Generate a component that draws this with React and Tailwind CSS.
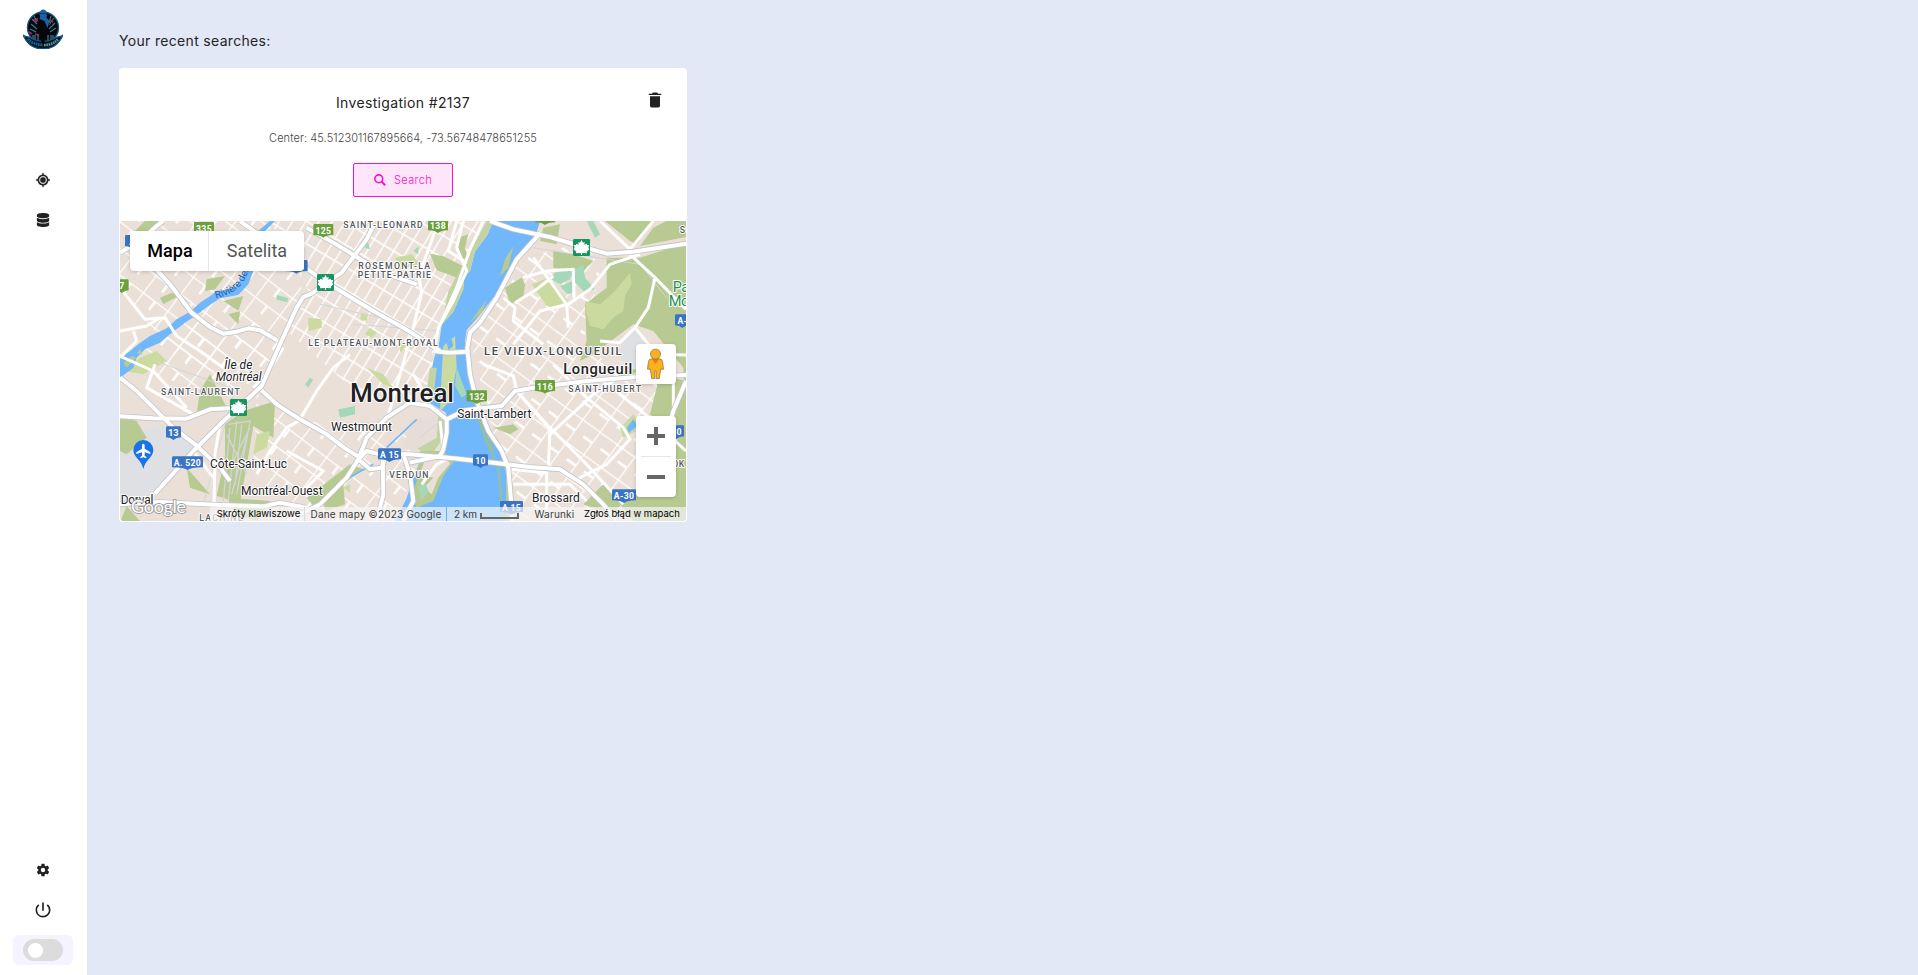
import React from 'react';
import { BiCurrentLocation } from 'react-icons/bi';
import { FaDatabase } from 'react-icons/fa';
import { IoSettingsSharp } from 'react-icons/io5';
import { IoMdTrash } from 'react-icons/io';
import { MdPowerSettingsNew } from 'react-icons/md';

const Logo = () => (
  <svg viewBox="0 0 40 40" className="h-10 w-10">
    <circle cx="20" cy="18.500" r="15.5" fill="#07090e" stroke="#17567f" strokeWidth="1.4" />
    <path d="M9 10l5 5M8 15l6 5M11 7l3 6M7 20l6 3M31 9l-5 7M32 14l-6 6M28 7l-2 7M33 19l-6 4" stroke="#3f7f86" strokeWidth="1.1" />
    <path d="M11 10l2 3M14 9v3M27 11l3 2M6 23l3 2M12 25l4 1" stroke="#9b2468" strokeWidth="1.800" />
    <path d="M10 30V26M12 31V26M15 32v-6M25 32v-6M28 31v-5M30 30v-4" stroke="#4b9298" strokeWidth="1" />
    <path d="M16 9h8l2.500 5-1.500 9-2 3v10h-5V26l-3-4z" fill="#05070b" />
    <path d="M16.500 5c0-6 7-6 7.500-.5l-.5 4 3 3.500-2 7-3-7-5-2 .5-2z" fill="#1c61a6" />
    <path d="M17 4.500h7" stroke="#0b2f57" strokeWidth=".8" />
    <path d="M0 26c4 3 7 1 10 4 6 3 14 3 20 0 3-3 6-1 10-4-3 7-8 14-20 14S3 33 0 26z" fill="#071522" stroke="#145a93" strokeWidth="1.3" />
    <path d="M18 30h4l-.5 5h-3z" fill="#05070b" />
    <path d="M5 30c4 5 10 5.500 15 6" stroke="#17639c" strokeWidth="2.600" strokeDasharray="1.6 .7" fill="none" />
    <path d="M21 36c5 0 10-1 14-6" stroke="#5f989b" strokeWidth="2.600" strokeDasharray="1.6 .7" fill="none" />
  </svg>
);

const Sidebar = () => {
  return (
    <aside className="flex w-[87px] shrink-0 flex-col items-center bg-white pt-[9px] pb-[10px] pr-px text-[#222]">
      <Logo />
      <nav className="mt-[121px] flex flex-col items-center gap-5">
        <div className="flex h-5 items-center"><BiCurrentLocation className="h-4 w-4" stroke="currentColor" strokeWidth=".5" /></div>
        <div className="flex h-5 items-center"><FaDatabase className="h-[14px] w-[14px]" /></div>
      </nav>
      <div className="mt-auto flex flex-col items-center">
        <div className="mb-5 flex h-5 items-center"><IoSettingsSharp className="h-[14px] w-[14px]" /></div>
        <div className="mb-[15px] flex h-5 items-center"><MdPowerSettingsNew className="h-5 w-5" /></div>
        <div className="flex h-[30px] w-[60px] items-center justify-center rounded-md bg-[#f5f3ff]">
          <div className="flex h-[22px] w-10 items-center rounded-full bg-[#dcdcdc] pl-[5px]">
            <div className="h-[15px] w-[15px] rounded-full bg-white" />
          </div>
        </div>
      </div>
    </aside>
  );
};

// [text, x, baseline, width, size, weight, color]
const labels = [
  ['SAINT-LEONARD', 670, 20, 238, 26, 500, '#54585d'],
  ['ROSEMONT-LA', 715, 145, 215, 26, 500, '#54585d'],
  ['PETITE-PATRIE', 713, 171, 220, 26, 500, '#54585d'],
  ['LE PLATEAU-MONT-ROYAL', 565, 375, 388, 26, 500, '#54585d'],
  ['LE VIEUX-LONGUEUIL', 1092, 402, 413, 34, 500, '#45494e'],
  ['Longueuil', 1330, 459, 207, 44, 500, '#202124'],
  ['SAINT-LAURENT', 123, 522, 236, 26, 500, '#54585d'],
  ['Montreal', 690, 542, 312, 78, 500, '#202124'],
  ['Saint-Lambert', 1012, 592, 222, 36, 400, '#202124'],
  ['SAINT-HUBERT', 1345, 513, 218, 26, 500, '#54585d'],
  ['Westmount', 633, 631, 183, 36, 400, '#202124'],
  ['VERDUN', 808, 771, 117, 26, 500, '#54585d'],
  ['Côte-Saint-Luc', 270, 740, 231, 36, 400, '#202124'],
  ['Montréal-Ouest', 363, 823, 245, 36, 400, '#202124'],
  ['Dorval', 2, 848, 98, 36, 400, '#202124'],
  ['LACHINE', 238, 899, 130, 26, 500, '#54585d'],
  ['Brossard', 1236, 843, 143, 36, 400, '#202124'],
  ['S', 1679, 36, 18, 26, 500, '#54585d'],
  ['Pa', 1658, 214, 50, 44, 400, '#1e8e4e'],
  ['Mo', 1646, 256, 62, 44, 400, '#1e8e4e'],
  ['OK', 1657, 737, 36, 26, 500, '#54585d'],
];

// [text, x, y, width, color]
const shields = [
  ['335', 222, 3, 60, '#6aa03d'],
  ['125', 580, 9, 60, '#6aa03d'],
  ['138', 924, -5, 60, '#6aa03d'],
  ['', 1245, -29, 60, '#6aa03d'],
  ['7', -14, 175, 40, '#6aa03d'],
  ['132', 1040, 508, 61, '#6aa03d'],
  ['116', 1245, 477, 60, '#6aa03d'],
  ['A', 15, 42, 44, '#3a74c4'],
  ['440', 495, 117, 68, '#3a74c4'],
  ['13', 138, 616, 45, '#3a74c4'],
  ['A. 520', 156, 706, 93, '#3a74c4'],
  ['A 15', 774, 682, 69, '#3a74c4'],
  ['10', 1059, 700, 45, '#3a74c4'],
  ['A 15', 1140, 840, 69, '#3a74c4'],
  ['A-30', 1476, 805, 72, '#3a74c4'],
  ['A-', 1665, 280, 44, '#3a74c4'],
  ['30', 1647, 613, 45, '#3a74c4'],
];

const parks = [[591, 159], [1359, 54], [330, 534]];

const highways = [
  'M0 95 L60 60 L110 15 L130 0',
  'M95 130 L150 190 L215 275 L270 318 L310 338 L350 332 L385 322 L420 328 L470 357',
  'M360 0 L500 100 L620 185 L760 270 L850 320 L960 390',
  'M560 20 L640 65 L730 120 L790 155 L890 190',
  'M760 15 L740 55 L665 155 L620 185 L575 218 L550 228 L530 260 L480 370 L425 495 L360 555 L300 610 L220 690 L105 818',
  'M0 470 L50 510 L110 570 L160 620 L225 670 L300 740 L330 780',
  'M0 586 L100 592 L200 593 L270 565 L360 560',
  'M425 508 L470 550 L540 595 L620 640 L680 685 L720 710 L740 690 L780 700 L870 700 L1000 712 L1120 725 L1230 738 L1320 745 L1390 790 L1450 850 L1490 900',
  'M0 850 L120 843 L300 852 L430 856 L480 845 L560 860',
  'M500 900 L600 850 L680 770 L715 715 L740 650 L800 590 L870 545 L930 555 L980 595 L980 635 L970 685 L960 705 L870 725',
  'M715 715 L750 745 L785 740 L800 700',
  'M1110 0 L1180 25 L1290 48 L1380 75 L1460 98 L1540 92 L1698 68',
  'M1262 35 L1190 115 L1130 230 L1080 305 L1050 335 L1042 380 L1050 460 L1070 540 L1105 630 L1145 690 L1165 740 L1178 900',
  'M940 390 L985 395 L1045 392',
  'M980 595 L1035 568 L1100 560 L1145 555 L1185 510 L1240 500 L1400 480 L1550 468 L1698 462',
  'M1698 480 L1660 570 L1640 640',
  'M850 900 L880 840 L870 760 L850 700 M788 710 L790 820 L770 900',
];

const avenues = [
  'M945 30 L920 100 L895 160 L905 215 L880 320 L840 460 L800 600',
  'M1030 0 L1010 80 L1040 150 L1000 240 L955 320 L940 400',
  'M1090 0 L1050 85 L1010 200 L965 300 M1010 0 L985 90 L1040 125',
  'M0 200 L75 295 L135 290 L170 345 L240 390 L310 440',
  'M0 330 L80 315 L120 290 M0 410 L50 360 L40 330',
  'M400 500 L450 445 L490 380 M540 595 L590 510 L640 440 L690 400',
  'M0 405 L100 450 L200 560 M105 430 L80 500 L220 580',
  'M300 610 L285 700 L282 850 M220 690 L280 770',
  'M410 760 L450 690 L500 620 L545 595 M500 690 L610 750 L550 810',
  'M1240 110 L1340 250 L1345 320 M1210 170 L1280 150 L1360 145 L1362 230',
  'M1345 250 L1410 205 L1470 130 L1560 100 M1345 250 L1260 270 L1180 370',
  'M1150 230 L1185 260 L1180 300 L1270 370 M1185 245 L1250 205 L1300 165',
  'M1530 100 L1605 170 L1585 260 L1545 320 L1500 365 L1440 360',
  'M1605 170 L1698 265 M1545 320 L1610 400 L1698 402 M1440 0 L1530 85 L1600 0',
  'M1090 430 L1180 465 L1190 510 L1290 625 L1285 745',
  'M1190 510 L1280 610 L1390 720 L1510 850 M1290 640 L1420 520 L1480 480',
  'M1175 745 L1280 755 L1280 900 M1180 790 L1350 790 L1400 840',
  'M1300 430 L1400 530 L1510 620 L1530 655 L1460 730 L1360 780',
  'M1500 520 L1600 600 L1698 690 M1660 430 L1660 560',
  'M960 600 L970 690 M905 790 L950 730 L985 712 M880 460 L930 545',
];

const greens = [
  'M45 30 l30 -30 h40 l-55 60z', 'M120 230 l35 -15 20 10 -45 25z', 'M260 175 l55 -10 -30 40 -30 5z',
  'M310 240 l60 -15 -15 45z', 'M325 280 l35 -10 -5 40z', 'M0 590 l50 10 30 50 -60 50 -20 -10z',
  'M240 510 l30 -50 30 60 20 40 -90 20z', 'M315 610 l55 -40 95 -30 -5 110 -60 -35 -20 120 -20 110 -70 -20 25 -120z',
  'M200 740 l70 80 -60 -20z', 'M0 905 l20 -50 40 45z', 'M320 830 l130 10 -40 60 -60 -20z',
  'M560 830 l130 -100 40 15 -150 110z', 'M610 840 l60 -50 5 60 -60 20z',
  'M1015 50 l30 -10 -10 40 10 40 -30 -10z', 'M930 98 l40 8 60 30 0 40 -80 -28z',
  'M1270 20 l50 -10 -10 60 -50 -10z', 'M1300 90 l60 10 60 20 -30 30 -90 -10z', 'M1155 200 l50 -30 10 20 -5 40 -40 20z',
  'M1455 0 H1600 L1550 70 1530 60z', 'M1640 0 H1698 V48 L1560 75 1600 20z',
  'M1460 110 H1560 L1698 66 V900 H1550 L1510 840 1560 800 1640 720 1698 610 1690 440 1600 330 1540 310 1420 400 1380 420 1400 360 1395 250 1460 200z',
  'M1500 850 l190 -140 V900 H1540z', 'M1590 580 l30 -120 78 20 v190z', 'M1120 620 l60 -10 15 15 -25 15z', 'M1390 850 l60 -60 60 50 -30 40z',
  'M1480 480 l55 -50 25 20z',
];

const limes = [
  'M1235 190 l50 -20 60 70 -45 20 -20 -5z', 'M1395 240 L1440 250 L1480 215 L1530 155 L1535 190 L1515 225 L1510 270 L1480 290 L1450 325 L1410 315 L1400 280z', 'M825 110 l50 -10 25 30 -60 10z',
  'M565 290 l40 5 0 25 -40 10z', 'M750 320 l20 15 -15 15 -20 -10z', 'M740 440 l50 20 30 40 -30 -10z', 'M725 275 l20 5 -5 20 -20 -5z',
  'M1500 620 l40 -40 30 40 -60 30z', 'M410 640 l40 -10 -10 50 -40 20z', 'M670 800 l20 -10 0 25z', 'M840 365 l20 10 -20 20z',
  'M60 410 l50 -20 30 30 -70 40 -60 -10z',
];

const teals = [
  'M1285 170 l35 -25 40 5 -10 25 -30 15z', 'M1320 195 l38 -15 0 35 -15 5z', 'M1365 145 l25 -15 5 40 30 35 -30 10 -30 -30z', 'M470 222 l35 10 -3 12 -32 -8z', 'M730 62 l15 5 5 18 -15 -5z',
  'M655 565 l50 -10 0 25 -45 10z', 'M880 90 l15 -15 0 25z', 'M1400 0 l20 0 20 40 -15 10z', 'M555 490 l15 -20 10 5 -15 25z',
];

const MapCanvas = () => (
  <svg viewBox="0 0 1698 900" className="block h-[300px] w-[566px]">
    <defs>
      <pattern id="plateau" width="34" height="58" patternUnits="userSpaceOnUse" patternTransform="rotate(31)">
        <path d="M0 0H34M0 0V58" stroke="#fff" strokeWidth="8" />
      </pattern>
      <pattern id="west" width="92" height="64" patternUnits="userSpaceOnUse" patternTransform="rotate(37)">
        <path d="M0 0H92M0 0V64M46 0V32" stroke="#fff" strokeWidth="7" fill="none" />
      </pattern>
      <pattern id="shore" width="64" height="84" patternUnits="userSpaceOnUse" patternTransform="rotate(36)">
        <path d="M0 0H64M0 0V84M32 42H64" stroke="#fff" strokeWidth="7" fill="none" />
      </pattern>
      <path id="riviere" d="M288 232 C330 222 355 205 372 180 L400 120" />
    </defs>
    <rect width="1698" height="900" fill="#ebe0d8" />
    <path d="M0 650 L120 610 L215 650 L225 680 L100 820 L0 850z" fill="#dfe0e4" />
    <path d="M0 0H440L560 230L470 400L300 460L160 400L0 200z" fill="url(#west)" />
    <path d="M240 300L480 370L400 510L160 500L0 400z" fill="url(#west)" />
    <path d="M450 0H1110L1040 160L950 340L930 500L860 540L740 540L500 330L570 220z" fill="url(#plateau)" />
    <path d="M410 520L560 600L860 640L900 720L820 900H540L400 760z" fill="url(#west)" />
    <path d="M1180 120L1400 60L1440 150L1380 400L1500 420L1698 470L1640 690L1520 850L1180 900L1100 560L1050 350z" fill="url(#shore)" />
    {greens.map((d) => <path key={d} d={d} fill="#b6ca91" />)}
    {limes.map((d) => <path key={d} d={d} fill="#cbdba0" />)}
    {teals.map((d) => <path key={d} d={d} fill="#a5d8b8" />)}
    <path d="M1500 365 L1545 320 L1590 370 L1580 440 L1510 450z" fill="#dfe0e4" />

    {/* back river */}
    <path d="M415 30 L455 -5 H470 L430 35z" fill="#70b7fc" />
    <path d="M385 140 L400 150 L385 190 L355 222 L300 232 L265 255 L225 285 L195 305 L150 340 L120 365 L75 385 L50 410 L40 440 L0 470 V410 L30 390 L55 370 L90 345 L140 322 L170 295 L210 272 L240 245 L275 222 L285 212 L345 200z" fill="#70b7fc" />
    <path d="M10 425 l25 -20 15 5 -30 30z M50 395 l12 -12 3 18z" fill="#b6ca91" />

    {/* St Lawrence */}
    <path d="M1120 0 L1102 42 L1065 92 L1050 150 L1032 172 L1030 205 L1000 272 L965 312 L958 362 L940 420 L930 480 L920 540 L978 575 L982 635 L965 690 L900 722 L878 775 L860 832 L825 900 H1170 L1165 742 L1110 622 L1080 562 L1060 492 L1045 432 L1035 362 L1040 327 L1075 287 L1130 217 L1180 142 L1210 82 L1245 50 L1260 0z" fill="#70b7fc" />
    <path d="M1120 0 L1102 42 L1065 92 L1050 150 L1032 172 L1030 205 L1000 272 L965 312 L985 210 L1040 110 L1100 0z" fill="#c3d3a4" />
    <path d="M1180 75 l-25 40 -15 50 25 -25z M1100 235 l-15 40 -30 25 -20 25 40 -55z" fill="#b6ca91" />
    <path d="M970 375 L1005 345 L1010 440 L990 540 L960 570 L965 460z" fill="#cbdba0" />
    <path d="M980 365 l15 -10 5 20 -15 12z" fill="#70b7fc" />
    <path d="M1010 440 l30 80 -15 10 -20 -35z" fill="#a5d8b8" />
    <path d="M930 440 L950 440 L940 540 L915 545z M900 600 L980 580 L978 640 L935 700 L880 680z" fill="#c3d3a4" />
    <path d="M870 600 L955 580 L950 650 L880 690 L850 680z" fill="#e6ddd6" />
    <path d="M900 690 L970 690 L1000 722 L970 765 L940 840 L890 860 L874 830 L890 780z" fill="#b6ca91" />
    <path d="M915 715 L980 710 L990 728 L955 770 L935 820 L912 800 L940 770 L900 760z" fill="#ebe0d8" />
    <path d="M895 800 l20 -20 10 30 -20 30z" fill="#a5d8b8" />
    <path d="M1065 560 L1095 650 L1135 740 L1150 900 M1085 600 L1120 690" stroke="#9dbf91" strokeWidth="6" fill="none" />
    <path d="M1140 690 L1165 740 L1172 900 L1158 900 L1158 760z" fill="#b6ca91" />
    <path d="M590 860 L650 790 L760 730 M800 680 L890 595" stroke="#70b7fc" strokeWidth="5" fill="none" />
    <path d="M1520 620 l20 -25 12 20 -25 20z" fill="#70b7fc" />

    {/* rail yard */}
    <path d="M330 620 L310 840 M350 600 L325 840 M365 610 L345 790 M380 650 L335 820 M325 610 L390 600 L350 820 M320 640 L380 760 M390 620 L330 740" stroke="#d3d5d3" strokeWidth="4" fill="none" />
    <path d="M105 420 L330 500 M600 250 L780 290 M700 310 L960 330 M1240 80 L1560 130 L1640 230 M250 850 L340 520 M900 650 L960 600" stroke="#d3d5da" strokeWidth="3" fill="none" />

    <g fill="none" stroke="#fff" strokeWidth="9" strokeLinejoin="round">
      {avenues.map((d) => <path key={d} d={d} />)}
    </g>
    <g fill="none" stroke="#c2c5c9" strokeWidth="17" strokeLinejoin="round">
      {highways.map((d) => <path key={d} d={d} />)}
    </g>
    <g fill="none" stroke="#fff" strokeWidth="12" strokeLinejoin="round">
      {highways.map((d) => <path key={d} d={d} />)}
    </g>

    {shields.map(([text, x, y, w, color]) => (
      <g key={`${text}-${x}`}>
        <path d={`M${x + 4} ${y} H${x + w - 4} Q${x + w} ${y} ${x + w} ${y + 4} V${y + 33} Q${x + w / 2 + 8} ${y + 34} ${x + w / 2} ${y + 41} Q${x + w / 2 - 8} ${y + 34} ${x} ${y + 33} V${y + 4} Q${x} ${y} ${x + 4} ${y}z`} fill={color} />
        <text x={x + w / 2} y={y + 30} textAnchor="middle" fontSize="26" fontWeight="700" fill="#fff" letterSpacing="1">{text}</text>
      </g>
    ))}

    {parks.map(([x, y]) => (
      <g key={x} transform={`translate(${x} ${y})`}>
        <rect width="51" height="51" rx="4" fill="#189460" />
        <path d="M25.500 3L30 11 35 9 34 17 41 14 42 18 49 18 46 26 49 31 41 38 42 43 29 42 27 43V48H24V43L22 42 9 43 10 38 2 31 5 26 2 18 9 18 10 14 17 17 16 9 21 11z" fill="#fff" />
      </g>
    ))}

    {/* airport */}
    <path d="M70 744 C64 715 40 710 40 687 A30 30 0 0 1 100 687 C100 710 76 715 70 744z" fill="#1a73e8" />
    <path d="M70 668 c3 0 4 3 4 6 v9 l17 11 v5 l-17 -5 v10 l5 4 v4 l-9 -3 -9 3 v-4 l5 -4 v-10 l-17 5 v-5 l17 -11 v-9 c0 -3 1 -6 4 -6z" fill="#fff" />

    <g stroke="#fff" strokeWidth="6" strokeLinejoin="round" paintOrder="stroke">
      {labels.map(([text, x, y, w, size, weight, color]) => (
        <text key={text} x={x} y={y} textLength={w} fontSize={size} fontWeight={weight} fill={color}>{text}</text>
      ))}
      <g fontStyle="italic" fontSize="36" fill="#202124">
        <text x="313" y="444" textLength="84">Île de</text>
        <text x="287" y="480" textLength="138">Montréal</text>
      </g>
    </g>
    <text fontSize="30" fill="#1a61ad"><textPath href="#riviere">Rivière des</textPath></text>
  </svg>
);

const Pegman = () => (
  <svg viewBox="0 0 20 34" className="h-[32px] w-[19px]" fill="#fbb11c" stroke="#8a7440" strokeWidth=".8">
    <path d="M6 11.500h8q3 0 3.500 3l1 8h-3l-1.500 10h-3.300v-8h-1.400v8H6L4.500 22.500h-3l1-8q.5-3 3.500-3z" />
    <path d="M6 11.800h8l-4 5z" fill="#e8791e" stroke="none" />
    <circle cx="10" cy="6.500" r="5.300" />
  </svg>
);

const MapPanel = () => {
  return (
    <div className="relative mx-px h-[300px] overflow-hidden rounded-b-sm font-['Roboto',sans-serif]">
      <MapCanvas />
      <div className="absolute top-[10px] left-[10px] flex h-10 rounded-sm bg-white text-lg leading-10 shadow-[0_1px_4px_-1px_rgba(0,0,0,0.3)]">
        <div className="w-[79px] border-r border-gray-200 pl-[2px] text-center font-medium text-black">Mapa</div>
        <div className="w-[95px] pl-px text-center text-[#565656]">Satelita</div>
      </div>
      <div className="absolute top-[123px] right-[10px] flex h-10 w-10 items-center justify-center rounded-sm bg-white pr-px shadow-[0_1px_4px_-1px_rgba(0,0,0,0.3)]">
        <Pegman />
      </div>
      <div className="absolute top-[195px] right-[10px] flex w-10 flex-col items-center rounded-sm bg-white text-[#666] shadow-[0_1px_4px_-1px_rgba(0,0,0,0.3)]">
        <svg viewBox="0 0 18 18" className="my-[11px] h-[18px] w-[18px]"><path d="M7 0h4v7h7v4h-7v7H7v-7H0V7h7z" fill="currentColor" /></svg>
        <div className="h-px w-[30px] bg-[#e6e6e6]" />
        <svg viewBox="0 0 18 18" className="my-[11px] h-[18px] w-[18px]"><path d="M0 7h18v4H0z" fill="currentColor" /></svg>
      </div>
      <svg viewBox="0 0 66 24" className="absolute bottom-0 left-[9px] h-6 w-[66px]">
        <text x="2" y="16" textLength="55" fontSize="18" fontFamily="Lato, sans-serif" fill="#fff" stroke="#9b9b9b" strokeWidth="1.800" paintOrder="stroke">Google</text>
      </svg>
      <div className="absolute right-0 bottom-0 flex h-[14px] w-[476px] items-center bg-[#f5f5f5]/70 font-['Inter',sans-serif] text-[10px] leading-[14px] whitespace-nowrap text-[#3c3c3c] *:shrink-0">
        <span className="w-[94px] pl-[3px] text-[9.500px] text-black">Skróty klawiszowe</span>
        <span className="h-[14px] w-px bg-[#dcdcdc]" />
        <span className="w-[141px] pl-px tracking-[0.2px]">Dane mapy ©2023 Google</span>
        <span className="h-[14px] w-px bg-[#6aaef0]" />
        <span className="w-[33px] pl-1">2 km</span>
        <span className="mt-1 h-[6px] w-[39px] border-x-2 border-b-2 border-[#666]" />
        <span className="w-[61px] pl-[10px] tracking-[0.2px]">Warunki</span>
        <span className="pl-1 text-[9.500px] text-black">Zgłoś błąd w mapach</span>
      </div>
    </div>
  );
};

const SearchCard = () => {
  return (
    <div className="relative flex h-[454px] w-[568px] flex-col rounded bg-white text-center">
      <IoMdTrash className="absolute top-[22px] right-[22px] h-5 w-5 text-[#222]" />
      <h3 className="mt-[25px] text-[14px] leading-5 tracking-[0.34px] text-[#242424]">Investigation #2137</h3>
      <p className="mt-[17px] text-[11px] leading-4 font-light tracking-[0.08px] text-[#444]">Center: 45.512301167895664, -73.56748478651255</p>
      <button className="mx-auto mt-[17px] mb-6 flex h-[34px] w-[100px] items-center justify-center gap-2 rounded-xs border border-[#fc0fc8] bg-[#ffe5fa] text-[11px] font-light tracking-[0.35px] text-[#fc0fc8]">
        <svg viewBox="0 0 12 12" className="h-3 w-3" fill="none" stroke="currentColor" strokeWidth="1.600">
          <circle cx="4.800" cy="4.800" r="3.900" />
          <path d="M7.600 7.600l3.600 3.600" strokeWidth="2" />
        </svg>
        Search
      </button>
      <MapPanel />
    </div>
  );
};

const App = () => {
  return (
    <div className="flex h-screen overflow-hidden bg-[#e2e8f6] font-['Inter',sans-serif]">
      <Sidebar />
      <main className="flex-1 pt-[31px] pl-8">
        <h2 className="mb-[17px] text-[14px] leading-5 tracking-[0.32px] text-[#242424]">Your recent searches:</h2>
        <SearchCard />
      </main>
    </div>
  );
};

export default App;
